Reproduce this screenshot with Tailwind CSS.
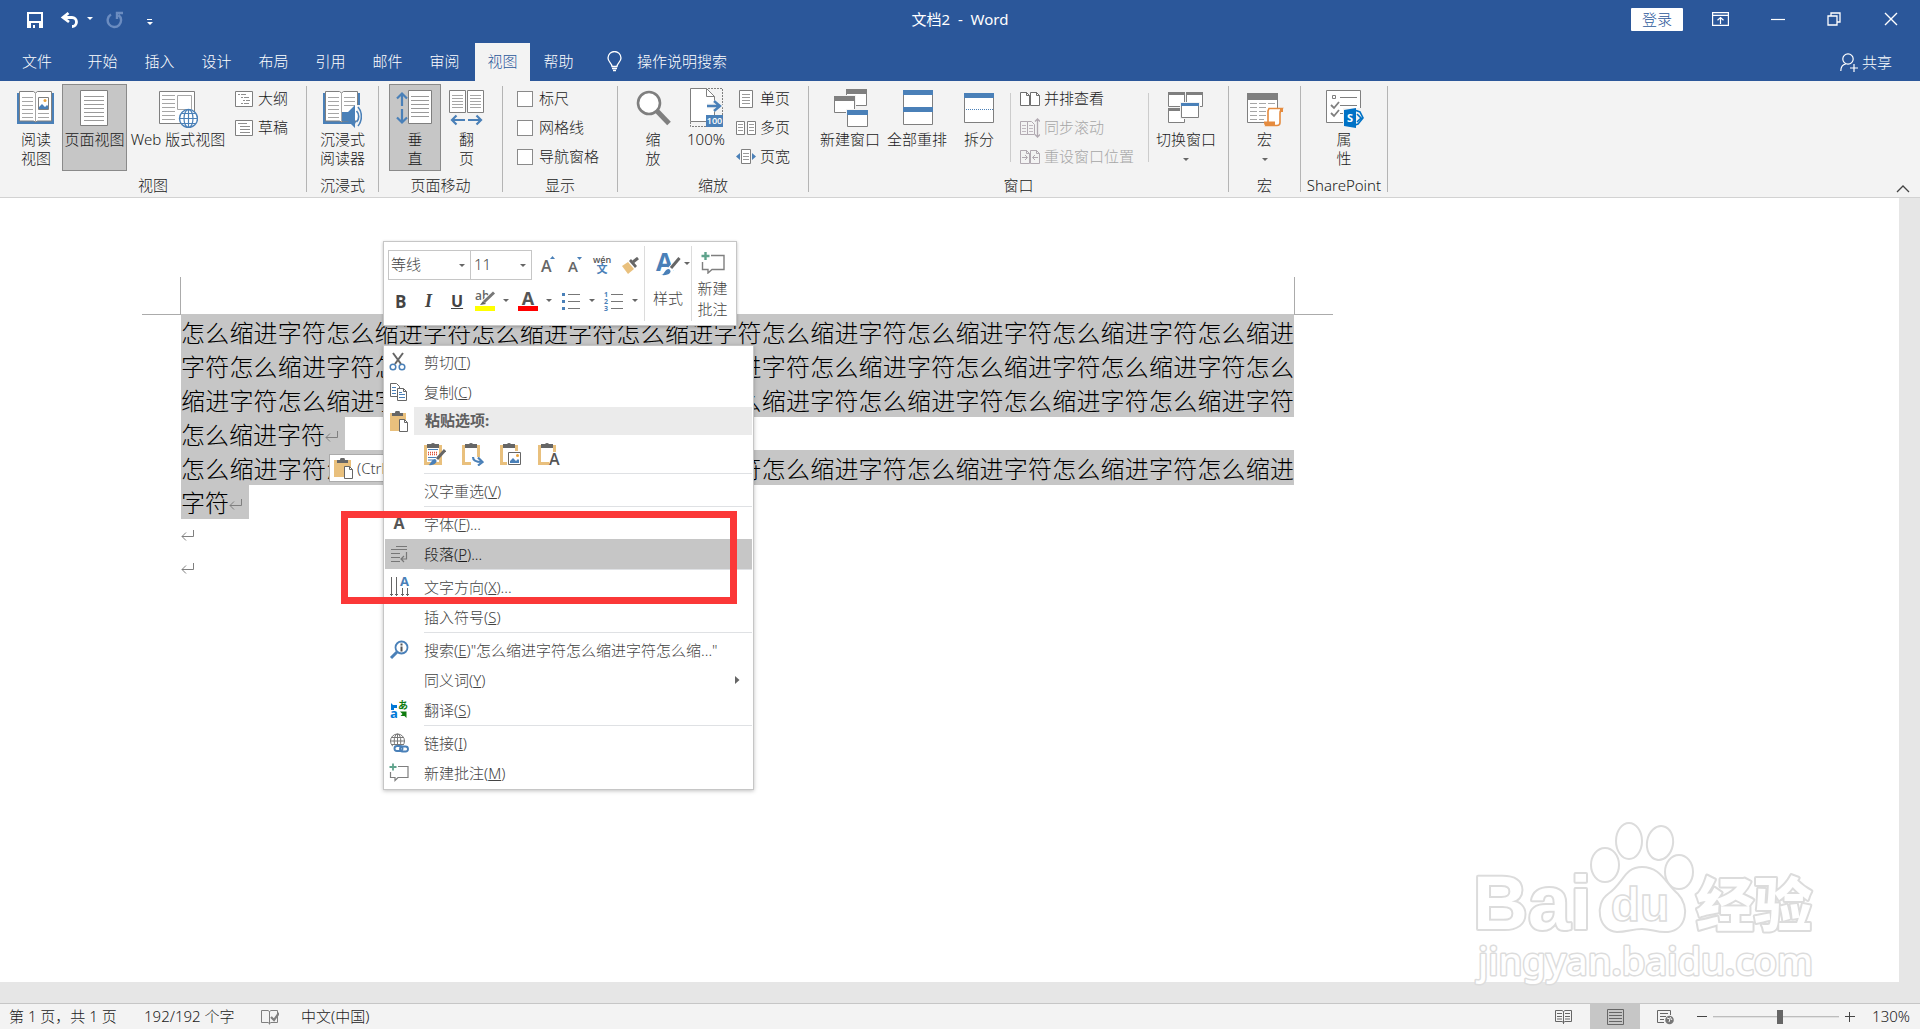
<!DOCTYPE html>
<html lang="zh-CN">
  <head>
    <meta charset="UTF-8" />
    <meta name="viewport" content="width=device-width, initial-scale=1.0" />
    <script src="https://cdn.jsdelivr.net/npm/@tailwindcss/browser@4"></script>
    <title>文档2 - Word</title>
  </head>
  <body class="flex h-screen flex-col overflow-hidden bg-[#e6e6e6] font-['Noto_Sans','Noto_Sans_CJK_SC',sans-serif] text-[15px] leading-[19px] font-light text-[#1a1a1a]">
    <header class="bg-[#2b579a] text-white">
      <!-- title bar -->
      <div class="grid h-[43px] grid-cols-[1fr_auto_1fr]">
        <div class="flex items-start pt-[11px] pl-[26px]">
          <button aria-label="保存">
            <svg width="18" height="18" viewBox="0 0 18 18"><path fill="#fff" fill-rule="evenodd" d="M1 1h16v16H1zM3 3v7h12V3zM5 12v5h2v-3h2v3h4v-5z" /></svg>
          </button>
          <button aria-label="撤消" class="ml-[16px]">
            <svg width="20" height="18" viewBox="0 0 20 18"><path d="M8.500 2L3 6.500L9 11M3.500 6.500H12a4.500 4.500 0 0 1 0 9" fill="none" stroke="#fff" stroke-width="2.800" /></svg>
          </button>
          <button aria-label="撤消列表" class="ml-[6px] pt-[5px]">
            <svg width="8" height="5" viewBox="0 0 8 5"><path d="M1 1h6L4 4z" fill="#fff" /></svg>
          </button>
          <button aria-label="重复" class="ml-[12px]">
            <svg width="18" height="18" viewBox="0 0 18 18"><path d="M12.500 4A6.700 6.700 0 1 1 5 3.500M11 8V2h6" fill="none" stroke="#6b8cc0" stroke-width="2.400" /></svg>
          </button>
          <button aria-label="自定义快速访问工具栏" class="ml-[22px] pt-[7px]">
            <svg width="8" height="8" viewBox="0 0 8 8"><path d="M1 1h5v1H1zM1 4h6L4 7z" fill="#fff" /></svg>
          </button>
        </div>
        <h1 class="self-start pt-[9px] text-[15px] leading-[20px] font-normal whitespace-pre">文档2  -  Word</h1>
        <div class="flex items-start justify-end pr-[22px]">
          <button class="mt-[8px] h-[23px] w-[52px] rounded-[1px] bg-white text-[#2b579a]">登录</button>
          <button aria-label="功能区显示选项" class="mt-[12px] ml-[29px]">
            <svg width="17" height="14" viewBox="0 0 17 14"><g fill="none" stroke="#fff" stroke-width="1.200"><path d="M.6.6h15.800v12.800H.6zM.6 3.300h15.800M8.500 12V5.500M5.500 8.300l3-2.800l3 2.800" /></g></svg>
          </button>
          <button aria-label="最小化" class="mt-[12px] ml-[42px]">
            <svg width="14" height="14" viewBox="0 0 14 14"><path d="M0 7.500h14" stroke="#fff" stroke-width="1.200" /></svg>
          </button>
          <button aria-label="还原" class="mt-[12px] ml-[42px]">
            <svg width="14" height="14" viewBox="0 0 14 14"><path d="M1 4h9v9H1zM4 4V1h9v9h-3" fill="none" stroke="#fff" stroke-width="1.300" /></svg>
          </button>
          <button aria-label="关闭" class="mt-[12px] ml-[43px]">
            <svg width="14" height="14" viewBox="0 0 14 14"><path d="M1 1l12 12M13 1L1 13" stroke="#fff" stroke-width="1.400" /></svg>
          </button>
        </div>
      </div>

      <!-- tabs -->
      <nav class="flex h-[38px] items-stretch">
        <button class="w-[74px] pb-[2px]">文件</button>
        <button class="w-[57px] pb-[2px]">开始</button>
        <button class="w-[57px] pb-[2px]">插入</button>
        <button class="w-[57px] pb-[2px]">设计</button>
        <button class="w-[57px] pb-[2px]">布局</button>
        <button class="w-[57px] pb-[2px]">引用</button>
        <button class="w-[57px] pb-[2px]">邮件</button>
        <button class="w-[57px] pb-[2px]">审阅</button>
        <button class="ml-[2px] w-[55px] bg-[#f3f3f3] pb-[2px] text-[#2b579a]">视图</button>
        <button class="w-[57px] pb-[2px]">帮助</button>
        <button class="ml-[20px] flex items-center gap-[15px] pb-[2px]">
          <svg width="15" height="21" viewBox="0 0 15 21"><path d="M5 15.500C5 12 1 11 1 7a6.500 6.500 0 0 1 13 0c0 4-4 5-4 8.500zM5 17.500h5M6 19.500h3" fill="none" stroke="#fff" stroke-width="1.300" /></svg>
          操作说明搜索
        </button>
        <button class="mr-[28px] ml-auto flex items-center gap-[4px]">
          <svg width="18" height="19" viewBox="0 0 18 19"><g fill="none" stroke="#fff" stroke-width="1.200"><circle cx="8" cy="6" r="5.200" /><path d="M.8 18c0-4 2-6.500 5-7M10 15h8M14 11v8" /></g></svg>
          共享
        </button>
      </nav>
    </header>

    <!-- ribbon -->
    <div class="flex h-[117px] shrink-0 border-b border-[#d2d2d2] bg-[#f3f3f3]">
      <section class="flex w-[306px] flex-col pt-[3px]">
        <div class="flex h-[87px] pl-[10px]">
          <button class="flex w-[52px] flex-col items-center gap-[2px] pt-[4px]">
            <svg width="40" height="40" viewBox="0 0 40 40">
              <path d="M1 5h37v31H1z" fill="#4a80b8" />
              <path d="M3.500 3.500h14l2 1.500l2-1.500h14v29.500h-14l-2 1l-2-1h-14z" fill="#fff" stroke="#7f7f7f" />
              <path d="M19.500 5v29M6 9.500h11M6 13.500h11M6 17.500h11M6 21.500h11M6 25.500h11M6 29.500h11M22 25.500h11M22 29.500h11" stroke="#a6a6a6" />
              <path d="M22.500 9.500h10v12h-10z" fill="#fff" stroke="#7f7f7f" />
              <path d="M23 21v-2l3-3l3 3l2-2l1 1v3z" fill="#4a80b8" /><circle cx="29" cy="12.500" r="1.500" fill="#e9a23b" />
            </svg>
            <span>阅读<br />视图</span>
          </button>
          <button class="flex w-[65px] flex-col items-center gap-[2px] border border-[#8a8a8a] bg-[#c6c6c6] pt-[3px]">
            <svg width="40" height="40" viewBox="0 0 40 40"><path d="M5.500 2.500h27v35h-27z" fill="#fff" stroke="#7f7f7f" /><path d="M9 8.500h20M9 12.500h20M9 16.500h20M9 20.500h20M9 24.500h20M9 28.500h20M9 32.500h20" stroke="#9a9a9a" /></svg>
            <span class="whitespace-nowrap">页面视图</span>
          </button>
          <button class="flex w-[102px] flex-col items-center gap-[2px] pt-[4px]">
            <svg width="40" height="40" viewBox="0 0 40 40">
              <path d="M1.500 3.500h35v32h-35z" fill="#fff" stroke="#7f7f7f" />
              <path d="M4 7.500h13M4 11.500h13M4 15.500h13M4 19.500h13M4 23.500h13M4 27.500h13M4 31.500h13" stroke="#a6a6a6" />
              <path d="M19.500 7.500h14v14h-14z" fill="#fff" stroke="#a6a6a6" />
              <circle cx="30.500" cy="30.500" r="9" fill="#fff" stroke="#4a80b8" stroke-width="1.400" />
              <path d="M21.500 30.500h18M30.500 21.500v18M23 25.500h15M23 35.500h15" stroke="#4a80b8" stroke-width="1.200" /><ellipse cx="30.500" cy="30.500" rx="4.500" ry="9" fill="none" stroke="#4a80b8" stroke-width="1.200" />
            </svg>
            <span class="whitespace-nowrap">Web 版式视图</span>
          </button>
          <div class="ml-[6px] flex flex-col">
            <button class="flex h-[29px] items-center gap-[5px]">
              <svg width="18" height="16" viewBox="0 0 18 16"><path d="M.5.5h17v15H.5z" fill="#fff" stroke="#7f7f7f" /><path d="M3 3.500h2M6 3.500h5M6 6.500h2M9 6.500h5M8 9.500h2M11 9.500h4M6 12.500h2M9 12.500h5" stroke="#8f8f8f" /></svg>
              大纲
            </button>
            <button class="flex h-[29px] items-center gap-[5px]">
              <svg width="18" height="16" viewBox="0 0 18 16"><path d="M.5.5h17v15H.5z" fill="#fff" stroke="#7f7f7f" /><path d="M3 3.500h9M5 6.500h10M5 9.500h10M5 12.500h10" stroke="#8f8f8f" /></svg>
              草稿
            </button>
          </div>
        </div>
        <p class="flex h-[26px] items-center justify-center pt-[2px]">视图</p>
      </section>
      <div class="my-[5px] w-px bg-[#b4b4b4]"></div>

      <section class="flex w-[71px] flex-col items-center pt-[3px]">
        <button class="flex h-[87px] flex-col items-center gap-[2px] pt-[4px]">
          <svg width="40" height="40" viewBox="0 0 40 40">
            <path d="M1 5h37v31H1z" fill="#4a80b8" />
            <path d="M3.500 3.500h14l2 1.500l2-1.500h14v29.500h-14l-2 1l-2-1h-14z" fill="#fff" stroke="#7f7f7f" />
            <path d="M19.500 5v29M6 9.500h11M6 13.500h11M6 17.500h11M6 21.500h11M6 25.500h11M6 29.500h11M22 9.500h11M22 13.500h11M22 17.500h11" stroke="#a6a6a6" />
            <path d="M35 17h5v23h-9l4-8z" fill="#f3f3f3" />
            <path d="M20 24h6l7-7v23l-7-7h-6z" fill="#4a80b8" /><path d="M34.500 23c3 3 3 8 0 11M36 19c4.500 5 4.500 14 0 19" fill="none" stroke="#4a80b8" stroke-width="1.600" />
          </svg>
          <span>沉浸式<br />阅读器</span>
        </button>
        <p class="flex h-[26px] items-center pt-[2px]">沉浸式</p>
      </section>
      <div class="my-[5px] w-px bg-[#b4b4b4]"></div>

      <section class="flex w-[123px] flex-col pt-[3px]">
        <div class="flex h-[87px] pl-[10px]">
          <button class="flex w-[52px] flex-col items-center gap-[2px] border border-[#8a8a8a] bg-[#c6c6c6] pt-[3px]">
            <svg width="40" height="40" viewBox="0 0 40 40">
              <path d="M13.500 2.500h23v33h-23z" fill="#fff" stroke="#7f7f7f" /><path d="M16 8.500h18M16 12.500h18M16 16.500h18M16 20.500h18M16 24.500h18M16 28.500h18" stroke="#9a9a9a" />
              <path d="M7 18V6M2 10.500L7 5.500l5 5M7 21v13M2 29.500l5 5l5-5" fill="none" stroke="#4a80b8" stroke-width="2.200" />
            </svg>
            <span>垂<br />直</span>
          </button>
          <button class="flex w-[51px] flex-col items-center gap-[2px] pt-[4px]">
            <svg width="40" height="40" viewBox="0 0 40 40">
              <path d="M2.500 2.500h16v22h-16zM20.500 2.500h16v22h-16z" fill="#fff" stroke="#7f7f7f" /><path d="M5 7.500h11M5 10.500h11M5 13.500h11M5 16.500h11M5 19.500h11M23 7.500h11M23 10.500h11M23 13.500h11M23 16.500h11M23 19.500h11" stroke="#a6a6a6" />
              <path d="M18 32H5M9.500 27.500L5 32l4.500 4.500M21 32h13M29.500 27.500L34 32l-4.500 4.500" fill="none" stroke="#4a80b8" stroke-width="2.200" />
            </svg>
            <span>翻<br />页</span>
          </button>
        </div>
        <p class="flex h-[26px] items-center justify-center pt-[2px]">页面移动</p>
      </section>
      <div class="my-[5px] w-px bg-[#b4b4b4]"></div>

      <section class="flex w-[114px] flex-col pt-[3px]">
        <div class="flex h-[87px] flex-col pl-[14px]">
          <label class="flex h-[29px] items-center gap-[6px]"><input type="checkbox" class="size-[16px] appearance-none border border-[#8a8a8a] bg-white" />标尺</label>
          <label class="flex h-[29px] items-center gap-[6px]"><input type="checkbox" class="size-[16px] appearance-none border border-[#8a8a8a] bg-white" />网格线</label>
          <label class="flex h-[29px] items-center gap-[6px]"><input type="checkbox" class="size-[16px] appearance-none border border-[#8a8a8a] bg-white" />导航窗格</label>
        </div>
        <p class="flex h-[26px] items-center justify-center pt-[2px]">显示</p>
      </section>
      <div class="my-[5px] w-px bg-[#b4b4b4]"></div>

      <section class="flex w-[190px] flex-col pt-[3px]">
        <div class="flex h-[87px] pl-[12px]">
          <button class="flex w-[46px] flex-col items-center gap-[2px] pt-[4px]">
            <svg width="40" height="40" viewBox="0 0 40 40"><circle cx="16" cy="15" r="11" fill="#fff" stroke="#7f7f7f" stroke-width="2.600" /><path d="M24 23l12 12.500" stroke="#7f7f7f" stroke-width="5" /></svg>
            <span>缩<br />放</span>
          </button>
          <button class="flex w-[60px] flex-col items-center gap-[2px] pt-[4px]">
            <svg width="40" height="40" viewBox="0 0 40 40">
              <path d="M22 .5h14.500V28M4.500 34v4.500H20" fill="none" stroke="#7f7f7f" stroke-dasharray="2 1" />
              <path d="M4.500.5h16l8 8v25h-24z" fill="#fff" stroke="#7f7f7f" /><path d="M20.500.5v8h8" fill="none" stroke="#7f7f7f" />
              <path d="M21 18h12M28 13l6 5l-6 5" fill="none" stroke="#f3f3f3" stroke-width="5" /><path d="M21 18h12M28 13l6 5l-6 5" fill="none" stroke="#4a80b8" stroke-width="2.400" />
              <path d="M20 27h17v12H20z" fill="#4a80b8" /><text x="28.500" y="36" text-anchor="middle" font-size="9" font-weight="600" fill="#fff" font-family="Open Sans">100</text>
            </svg>
            <span>100%</span>
          </button>
          <div class="flex flex-col">
            <button class="flex h-[29px] items-center gap-[4px]">
              <svg width="20" height="18" viewBox="0 0 20 18"><path d="M3.500.5h13v17h-13z" fill="#fff" stroke="#7f7f7f" /><path d="M6 4.500h8M6 7.500h8M6 10.500h8M6 13.500h8" stroke="#9a9a9a" /></svg>
              单页
            </button>
            <button class="flex h-[29px] items-center gap-[4px]">
              <svg width="20" height="16" viewBox="0 0 20 16"><path d="M.5 1.500h8v13h-8zM11.500 1.500h8v13h-8z" fill="#fff" stroke="#7f7f7f" /><path d="M2 4.500h5M2 7.500h5M2 10.500h5M13 4.500h5M13 7.500h5M13 10.500h5" stroke="#9a9a9a" /></svg>
              多页
            </button>
            <button class="flex h-[29px] items-center gap-[4px]">
              <svg width="20" height="16" viewBox="0 0 20 16"><path d="M5.500.5h9v14h-9z" fill="#fff" stroke="#7f7f7f" /><path d="M7 4.500h6M7 7.500h6M7 10.500h6" stroke="#9a9a9a" /><path d="M4 4v7L0 7.500zM16 4v7l4-3.500z" fill="#4a80b8" /></svg>
              页宽
            </button>
          </div>
        </div>
        <p class="flex h-[26px] items-center justify-center pt-[2px]">缩放</p>
      </section>
      <div class="my-[5px] w-px bg-[#b4b4b4]"></div>

      <section class="flex w-[419px] flex-col pt-[3px]">
        <div class="flex h-[87px] pl-[8px]">
          <button class="flex w-[66px] flex-col items-center gap-[2px] pt-[4px]">
            <svg width="40" height="40" viewBox="0 0 40 40">
              <path d="M16.500 1.500h20v16h-20z" fill="#fff" stroke="#7f7f7f" /><path d="M16 1h21v5H16z" fill="#7f7f7f" />
              <path d="M3 7h23v19H3z" fill="#f3f3f3" /><path d="M4.500 8.500h20v16h-20z" fill="#fff" stroke="#7f7f7f" /><path d="M4 8h21v5H4z" fill="#7f7f7f" />
              <path d="M16 21h23v19H16z" fill="#f3f3f3" /><path d="M17.500 22.500h20v16h-20z" fill="#fff" stroke="#7f7f7f" /><path d="M17 22h21v5H17z" fill="#4a80b8" />
            </svg>
            <span class="whitespace-nowrap">新建窗口</span>
          </button>
          <button class="flex w-[68px] flex-col items-center gap-[2px] pt-[4px]">
            <svg width="40" height="40" viewBox="0 0 40 40"><path d="M6.500 2.500h29v34h-29z" fill="#fff" stroke="#7f7f7f" /><path d="M6 2h30v5H6zM6 19h30v5H6z" fill="#4a80b8" /></svg>
            <span class="whitespace-nowrap">全部重排</span>
          </button>
          <button class="flex w-[56px] flex-col items-center gap-[2px] pt-[4px]">
            <svg width="40" height="40" viewBox="0 0 40 40"><path d="M5.500 5.500h29v29h-29z" fill="#fff" stroke="#7f7f7f" /><path d="M5 5h30v5H5z" fill="#4a80b8" /><path d="M7 21.500h27" stroke="#4a80b8" stroke-dasharray="1 1" /></svg>
            <span>拆分</span>
          </button>
          <div class="mt-[9px] ml-[3px] h-[69px] w-px bg-[#cccccc]"></div>
          <div class="ml-[9px] flex w-[128px] flex-col">
            <button class="flex h-[29px] items-center gap-[4px]">
              <svg width="20" height="16" viewBox="0 0 20 16"><path d="M.5 1.500h6l3 3v10h-9zM10.500 1.500h6l3 3v10h-9z" fill="#fff" stroke="#6f6f6f" /><path d="M6.500 1v3.500h3M16.500 1v3.500h3" fill="none" stroke="#6f6f6f" /></svg>
              并排查看
            </button>
            <button disabled class="flex h-[29px] items-center gap-[4px] text-[#a6a6a6]">
              <svg width="20" height="20" viewBox="0 0 20 20"><path d="M7.500 3.500H.5v13h7M7.500 3.500h4l3 3v10h-7z" fill="none" stroke="#b1a9b1" /><path d="M2 7.500h4M2 10.500h4M2 13.500h4M9 7.500h4M9 10.500h4M9 13.500h4" stroke="#c0b8c0" /><path d="M17.500 1v18M15 3.500L17.500 1L20 3.500M15 16.500l2.500 2.500l2.500-2.500" fill="none" stroke="#b1a9b1" stroke-width="1.300" /></svg>
              同步滚动
            </button>
            <button disabled class="flex h-[29px] items-center gap-[4px] text-[#a6a6a6]">
              <svg width="20" height="16" viewBox="0 0 20 16"><path d="M.5 1.500h6l3 3v10h-9zM10.500 1.500h6l3 3v10h-9z" fill="none" stroke="#b1a9b1" /><path d="M6.500 1v3.500h3M16.500 1v3.500h3M2 8.500h5M5 6l2.500 2.500L5 11M18 8.500h-5M15 6l-2.500 2.500L15 11" fill="none" stroke="#b1a9b1" /></svg>
              重设窗口位置
            </button>
          </div>
          <div class="mt-[9px] h-[69px] w-px bg-[#cccccc]"></div>
          <button class="flex w-[74px] flex-col items-center gap-[2px] pt-[4px]">
            <svg width="40" height="40" viewBox="0 0 40 40">
              <path d="M2.500 4.500h16v14h-16zM20.500 4.500h16v14h-16zM2.500 20.500h16v14h-16z" fill="#fff" stroke="#7f7f7f" /><path d="M2 4h17v3H2zM20 4h17v3H20zM2 20h17v3H2z" fill="#7f7f7f" />
              <path d="M14 14h20v17H14z" fill="#f3f3f3" /><path d="M15.500 15.500h17v14h-17z" fill="#fff" stroke="#7f7f7f" /><path d="M15 15h18v3H15z" fill="#4a80b8" />
            </svg>
            <span class="whitespace-nowrap">切换窗口</span>
            <svg class="mt-[7px]" width="6" height="4" viewBox="0 0 6 4"><path d="M0 0h6L3 3z" fill="#666" /></svg>
          </button>
        </div>
        <p class="flex h-[26px] items-center justify-center pt-[2px]">窗口</p>
      </section>
      <div class="my-[5px] w-px bg-[#b4b4b4]"></div>

      <section class="flex w-[71px] flex-col items-center pt-[3px]">
        <button class="flex h-[87px] flex-col items-center gap-[2px] pt-[4px]">
          <svg width="40" height="40" viewBox="0 0 40 40">
            <path d="M2.500 5.500h30v29h-30z" fill="#fff" stroke="#7f7f7f" /><path d="M2 5h31v7H2z" fill="#7f7f7f" />
            <path d="M5 15.500h7M14 15.500h7M23 15.500h7M5 19.500h7M14 19.500h7M5 23.500h7M14 23.500h7M5 27.500h7M14 27.500h7M5 31.500h7M14 31.500h5" stroke="#a6a6a6" />
            <path d="M24 20.500h13c-2 2-2 3-2 5v9c0 2-1 3-3 3H21l2-3V23z" fill="#fff" stroke="#e58b3e" stroke-width="1.600" /><path d="M19 33.500h11v4H21c-2 0-2-2-2-4zM35 20h3v4h-3z" fill="#e58b3e" />
          </svg>
          <span>宏</span>
          <svg class="mt-[7px]" width="6" height="4" viewBox="0 0 6 4"><path d="M0 0h6L3 3z" fill="#666" /></svg>
        </button>
        <p class="flex h-[26px] items-center pt-[2px]">宏</p>
      </section>
      <div class="my-[5px] w-px bg-[#b4b4b4]"></div>

      <section class="flex w-[86px] flex-col items-center pt-[3px]">
        <button class="flex h-[87px] flex-col items-center gap-[2px] pt-[4px]">
          <svg width="40" height="40" viewBox="0 0 40 40">
            <path d="M2.500 2.500h34v32h-34z" fill="#fff" stroke="#7f7f7f" /><path d="M8.500 7.500h3v3h-3zM16 9.500h17M16 17.500h17M16 25.500h5" fill="none" stroke="#7f7f7f" /><path d="M7 17l3 3l5-6M7 25l3 3l5-6" fill="none" stroke="#7f7f7f" stroke-width="1.800" />
            <path d="M19 20h21v20H19z" fill="#f3f3f3" /><path d="M32 22.500l4 1.500l3 6l-5 6l-3 1M33 26l4 4l-4 4" fill="none" stroke="#0072c6" stroke-width="1.600" />
            <path d="M20 22l12-2v20l-12-2z" fill="#0072c6" /><text x="26" y="34" text-anchor="middle" font-size="11" font-weight="700" fill="#fff" font-family="Open Sans">S</text>
          </svg>
          <span>属<br />性</span>
        </button>
        <p class="flex h-[26px] items-center pt-[2px]">SharePoint</p>
      </section>
      <div class="my-[5px] w-px bg-[#b4b4b4]"></div>
      <button aria-label="折叠功能区" class="mr-[10px] mb-[4px] ml-auto self-end">
        <svg width="14" height="8" viewBox="0 0 14 8"><path d="M1 7l6-6l6 6" fill="none" stroke="#444" stroke-width="1.300" /></svg>
      </button>
    </div>

    <!-- document -->
    <main class="relative mr-[21px] min-h-0 flex-1 bg-white pt-[79px] pl-[142px]">
      <div class="flex h-[38px]">
        <div class="w-[39px] border-r border-b border-[#ababab]"></div>
        <div class="w-[1113px]"></div>
        <div class="w-[39px] border-b border-l border-[#ababab]"></div>
      </div>
      <article class="ml-[39px] w-[1113px] text-justify font-['Noto_Sans_CJK_SC',sans-serif] text-[24px] leading-[34px] text-black">
        <p><span class="bg-[#c6c6c6] pr-[7px]">怎么缩进字符怎么缩进字符怎么缩进字符怎么缩进字符怎么缩进字符怎么缩进字符怎么缩进字符怎么缩进字符怎么缩进字符怎么缩进字符怎么缩进字符怎么缩进字符怎么缩进字符怎么缩进字符怎么缩进字符怎么缩进字符怎么缩进字符怎么缩进字符怎么缩进字符怎么缩进字符怎么缩进字符怎么缩进字符怎么缩进字符怎么缩进字符<svg class="inline" width="13" height="12" viewBox="0 0 13 12"><path d="M12.500 0v6.500H1M5 2.500l-4 4l4 4" fill="none" stroke="#7f7f7f" /></svg></span></p>
        <p><span class="bg-[#c6c6c6] pr-[7px]">怎么缩进字符怎么缩进字符怎么缩进字符怎么缩进字符怎么缩进字符怎么缩进字符怎么缩进字符怎么缩进字符<svg class="inline" width="13" height="12" viewBox="0 0 13 12"><path d="M12.500 0v6.500H1M5 2.500l-4 4l4 4" fill="none" stroke="#7f7f7f" /></svg></span></p>
        <p class="flex h-[33px] items-center"><svg width="13" height="12" viewBox="0 0 13 12"><path d="M12.500 0v6.500H1M5 2.500l-4 4l4 4" fill="none" stroke="#7f7f7f" /></svg></p>
        <p class="flex h-[33px] items-center"><svg width="13" height="12" viewBox="0 0 13 12"><path d="M12.500 0v6.500H1M5 2.500l-4 4l4 4" fill="none" stroke="#7f7f7f" /></svg></p>
      </article>

      <!-- paste options tag -->
      <button class="absolute top-[256px] left-[329px] flex h-[28px] items-center gap-[3px] border border-[#ababab] bg-white px-[4px] text-[#444]">
        <svg width="20" height="21" viewBox="0 0 20 21"><path d="M0 2h17v17H0z" fill="#e9c07d" /><path d="M3 2h3a2.500 2.500 0 0 1 5 0h3v3H3z" fill="#666" /><path d="M10.500 8.500h5l3 3v9h-8z" fill="#fff" stroke="#666" /><path d="M15.500 8.500v3h3" fill="none" stroke="#666" /></svg>
        (Ctrl)
      </button>

      <!-- mini toolbar -->
      <div class="absolute top-[43px] left-[383px] flex h-[85px] w-[354px] border border-[#c6c6c6] bg-white text-[#444] shadow-[0_1px_3px_rgba(0,0,0,0.25)]">
        <div class="flex w-[260px] flex-col pt-[8px] pl-[4px]">
          <div class="flex h-[30px] items-center">
            <div class="relative h-[30px] w-[83px]">
              <select aria-label="字体" class="h-full w-full appearance-none border border-[#c6c6c6] bg-white px-[2px] pb-[2px]"><option>等线</option></select>
              <svg class="pointer-events-none absolute top-[14px] right-[6px]" width="6" height="4" viewBox="0 0 6 4"><path d="M0 0h6L3 3z" fill="#666" /></svg>
            </div>
            <div class="relative -ml-px h-[30px] w-[62px]">
              <select aria-label="字号" class="h-full w-full appearance-none border border-[#c6c6c6] bg-white px-[3px] pb-[2px]"><option>11</option></select>
              <svg class="pointer-events-none absolute top-[14px] right-[6px]" width="6" height="4" viewBox="0 0 6 4"><path d="M0 0h6L3 3z" fill="#666" /></svg>
            </div>
            <button aria-label="增大字号" class="ml-[9px]"><svg class="overflow-visible" width="15" height="18" viewBox="0 0 15 18"><text x="0" y="16" font-size="16" font-weight="600" fill="#666" font-family="Open Sans">A</text><path d="M9 3h5l-2.500-3z" fill="#4a80b8" /></svg></button>
            <button aria-label="减小字号" class="ml-[12px]"><svg class="overflow-visible" width="15" height="18" viewBox="0 0 15 18"><text x="0" y="16" font-size="15" font-weight="600" fill="#666" font-family="Open Sans">A</text><path d="M9 1h5l-2.500 3z" fill="#4a80b8" /></svg></button>
            <button aria-label="拼音指南" class="ml-[10px]"><svg class="overflow-visible" width="18" height="20" viewBox="0 0 18 20"><text x="9" y="8" text-anchor="middle" font-size="9" font-weight="600" fill="#555" font-family="Open Sans">wén</text><text x="9" y="18" text-anchor="middle" font-size="11" font-weight="700" fill="#4a80b8" font-family="Noto Sans CJK SC">文</text></svg></button>
            <button aria-label="格式刷" class="ml-[10px]"><svg width="18" height="17" viewBox="0 0 18 17"><path d="M1 9l6-4l6 7l-6 5z" fill="#e9c07d" /><path d="M8 4l2-2l6 7l-2 2z" fill="#666" /><path d="M12 5l5-4" stroke="#666" stroke-width="3" /></svg></button>
          </div>
          <div class="mt-[9px] flex h-[24px] items-center pl-[7px]">
            <button aria-label="加粗" class="w-[15px] text-left font-['Open_Sans'] text-[17px] font-bold">B</button>
            <button aria-label="倾斜" class="ml-[15px] w-[12px] text-left font-['Liberation_Serif'] text-[18px] font-bold italic">I</button>
            <button aria-label="下划线" class="ml-[14px] w-[12px] text-left font-['Open_Sans'] text-[16px] font-bold underline">U</button>
            <button aria-label="突出显示" class="ml-[12px]"><svg class="overflow-visible" width="20" height="20" viewBox="0 0 20 20"><text x="0" y="9" font-size="12" font-weight="600" fill="#666" font-family="Open Sans">ab</text><path d="M19 1.500L9 11" stroke="#fff" stroke-width="5" /><path d="M19 1.500L9 11" stroke="#777" stroke-width="3" /><path d="M5 14l3-4l3 3z" fill="#666" /><path d="M0 15h20v5H0z" fill="#ff0" /></svg></button>
            <svg class="ml-[8px]" width="6" height="4" viewBox="0 0 6 4"><path d="M0 0h6L3 3z" fill="#666" /></svg>
            <button aria-label="字体颜色" class="ml-[9px]"><svg class="overflow-visible" width="20" height="20" viewBox="0 0 20 20"><text x="10" y="14" text-anchor="middle" font-size="18" font-weight="700" fill="#555" font-family="Open Sans">A</text><path d="M0 15h20v5H0z" fill="red" /></svg></button>
            <svg class="ml-[8px]" width="6" height="4" viewBox="0 0 6 4"><path d="M0 0h6L3 3z" fill="#666" /></svg>
            <button aria-label="项目符号" class="ml-[9px]"><svg width="20" height="18" viewBox="0 0 20 18"><path d="M1 1h3v3H1zM1 8h3v3H1zM1 15h3v3H1z" fill="#4a80b8" /><path d="M7 2.500h12M7 9.500h12M7 16.500h12" stroke="#777" /></svg></button>
            <svg class="ml-[8px]" width="6" height="4" viewBox="0 0 6 4"><path d="M0 0h6L3 3z" fill="#666" /></svg>
            <button aria-label="编号" class="ml-[9px]"><svg class="overflow-visible" width="20" height="19" viewBox="0 0 20 19"><g font-size="7" font-weight="700" fill="#4a80b8" font-family="Open Sans"><text x="0" y="5">1</text><text x="0" y="12">2</text><text x="0" y="19">3</text></g><path d="M7 2.500h12M7 9.500h12M7 16.500h12" stroke="#777" /></svg></button>
            <svg class="ml-[8px]" width="6" height="4" viewBox="0 0 6 4"><path d="M0 0h6L3 3z" fill="#666" /></svg>
          </div>
        </div>
        <div class="my-[4px] w-px bg-[#dcdcdc]"></div>
        <button class="flex w-[46px] flex-col items-center gap-[12px] pt-[10px]">
          <svg class="overflow-visible" width="46" height="25" viewBox="0 0 46 25"><text x="11" y="19" font-size="25" font-weight="700" fill="#4a80b8" font-family="Open Sans">A</text><path d="M35 7L24 19" stroke="#fff" stroke-width="6" /><path d="M34.500 6L26 16" stroke="#666" stroke-width="3" /><path d="M16 23c4 0 3-6 8-6c4 3 0 7-8 6z" fill="#4a80b8" /><path d="M39 10h6l-3 3z" fill="#666" /></svg>
          <span>样式</span>
        </button>
        <div class="my-[4px] w-px bg-[#dcdcdc]"></div>
        <button class="flex flex-1 flex-col items-center gap-[4px] pt-[9px] pr-[3px]">
          <svg width="24" height="23" viewBox="0 0 24 23"><path d="M10 4.500h13v14H11l-4 3.500v-3.500H1.500V11" fill="none" stroke="#7f7f7f" stroke-width="1.400" /><path d="M4.500 1v8M.5 5h8" stroke="#5fa38c" stroke-width="2.400" /></svg>
          <span class="leading-[21px]">新建<br />批注</span>
        </button>
      </div>

      <!-- context menu -->
      <ul class="absolute top-[147px] left-[383px] w-[371px] border border-[#c6c6c6] bg-white p-px text-[#444] shadow-[0_1px_4px_rgba(0,0,0,0.25)]">
        <li><button class="flex h-[30px] w-full items-center gap-[15px] pl-[4px] text-left">
          <svg width="20" height="20" viewBox="0 0 20 20"><path d="M4 1l8 11M14 1L6 12" stroke="#666" stroke-width="2" /><circle cx="4" cy="15" r="2.800" fill="none" stroke="#4a80b8" stroke-width="1.500" /><circle cx="13" cy="15" r="2.800" fill="none" stroke="#4a80b8" stroke-width="1.500" /></svg>
          <span>剪切(<u>T</u>)</span></button></li>
        <li><button class="flex h-[30px] w-full items-center gap-[15px] pl-[4px] text-left">
          <svg width="20" height="20" viewBox="0 0 20 20"><path d="M1.500 1.500h6l3 3v10h-9z" fill="#fff" stroke="#666" /><path d="M3 5.500h4M3 8.500h4M3 11.500h4" stroke="#4a80b8" /><path d="M8.500 6.500h6l3 3v9h-9z" fill="#fff" stroke="#666" /><path d="M14.500 6.500v3h3" fill="none" stroke="#666" /><path d="M10 10.500h3M10 12.500h6M10 15.500h6" stroke="#4a80b8" /></svg>
          <span>复制(<u>C</u>)</span></button></li>
        <li class="flex h-[28px] items-center pl-[4px]">
          <svg width="20" height="21" viewBox="0 0 20 21"><path d="M1 2h16v18H1z" fill="#e9c07d" /><path d="M3 2h3a2.500 2.500 0 0 1 5 0h3v3H3z" fill="#666" /><path d="M10.500 8.500h5l3 3v9h-8z" fill="#fff" stroke="#666" /><path d="M15.500 8.500v3h3" fill="none" stroke="#666" /></svg>
          <span class="ml-[5px] flex h-full flex-1 items-center bg-[#ebebeb] pb-[2px] pl-[11px] font-bold text-[#5f5f5f]">粘贴选项:</span>
        </li>
        <li class="flex h-[38px] items-center gap-[16px] pl-[39px]">
          <button aria-label="保留源格式"><svg width="22" height="24" viewBox="0 0 22 24"><path d="M0 3h18v20H0z" fill="#e9c07d" /><path d="M3 6h12v14H3z" fill="#fff" /><path d="M3 2h4a2.500 2.500 0 0 1 4 0h4v4H3z" fill="#666" /><path d="M4 7.500h10M4 15.500h8M4 18h5" stroke="#4a80b8" /><path d="M4 10.500h10M4 12.500h10" stroke="#e0533a" stroke-width="1.500" stroke-dasharray="1 1" /><path d="M21 8l-8 9" stroke="#666" stroke-width="3" /><path d="M4 23c3 0 3-6 7-6c4 2 0 7-7 6z" fill="#4a80b8" /></svg></button>
          <button aria-label="合并格式"><svg width="22" height="24" viewBox="0 0 22 24"><path d="M0 3h18v20H0z" fill="#e9c07d" /><path d="M3 6h12v14H3z" fill="#fff" /><path d="M3 2h4a2.500 2.500 0 0 1 4 0h4v4H3z" fill="#666" /><path d="M9 15h13v9H9z" fill="#fff" /><path d="M11 15c0 4 3 5 9 5M16 15.500l4.500 4.500l-4.500 3.500" fill="none" stroke="#4a80b8" stroke-width="2.200" /></svg></button>
          <button aria-label="图片"><svg width="22" height="24" viewBox="0 0 22 24"><path d="M0 3h18v20H0z" fill="#e9c07d" /><path d="M3 6h12v14H3z" fill="#fff" /><path d="M3 2h4a2.500 2.500 0 0 1 4 0h4v4H3z" fill="#666" /><path d="M7 9h15v15H7z" fill="#fff" /><path d="M8.500 10.500h12v12h-12z" fill="#fff" stroke="#666" /><path d="M10 21v-2l3-3l3 3l2-2l1 1v3z" fill="#4a80b8" /><circle cx="17.500" cy="13.500" r="1.500" fill="#e9a23b" /></svg></button>
          <button aria-label="只保留文本"><svg class="overflow-visible" width="22" height="24" viewBox="0 0 22 24"><path d="M0 3h18v20H0z" fill="#e9c07d" /><path d="M3 6h12v14H3z" fill="#fff" /><path d="M3 2h4a2.500 2.500 0 0 1 4 0h4v4H3z" fill="#666" /><path d="M11 10h11v14H11z" fill="#fff" /><text x="11" y="23" font-size="16" font-weight="600" fill="#555" font-family="Open Sans">A</text></svg></button>
        </li>
        <li class="mb-[2px] ml-[39px] h-px bg-[#dfe1e4]"></li>
        <li><button class="flex h-[30px] w-full items-center pl-[39px]">汉字重选(<u>V</u>)</button></li>
        <li class="mb-[2px] ml-[39px] h-px bg-[#dfe1e4]"></li>
        <li><button class="flex h-[30px] w-full items-center gap-[15px] pl-[4px] text-left">
          <svg class="overflow-visible" width="20" height="20" viewBox="0 0 20 20"><text x="10" y="15" text-anchor="middle" font-size="16" font-weight="700" fill="#555" font-family="Open Sans">A</text></svg>
          <span>字体(<u>F</u>)...</span></button></li>
        <li><button class="flex h-[30px] w-full items-center gap-[15px] bg-[#c6c6c6] pl-[4px] text-left text-[#1a1a1a]">
          <svg width="20" height="20" viewBox="0 0 20 20"><path d="M7 2.500h11M2 5.500h16M2 9.500h9M2 13.500h9M2 17.500h9M17.500 8v7h-5M15 12l-3 3l3 3" fill="none" stroke="#777" stroke-width="1.200" /></svg>
          <span>段落(<u>P</u>)...</span></button></li>
        <li class="mb-[2px] ml-[39px] h-px bg-[#dfe1e4]"></li>
        <li><button class="flex h-[30px] w-full items-center gap-[15px] pl-[4px] text-left">
          <svg class="overflow-visible" width="20" height="20" viewBox="0 0 20 20"><path d="M2.500 0v19M7.500 0v19M13.500 11v8M18.500 11v8M1 17.500h3M6 17.500h3M12 17.500h3M17 17.500h3" stroke="#666" /><text x="11" y="9" font-size="13" font-weight="700" fill="#4a80b8" font-family="Open Sans">A</text></svg>
          <span>文字方向(<u>X</u>)...</span></button></li>
        <li><button class="flex h-[30px] w-full items-center pl-[39px]">插入符号(<u>S</u>)</button></li>
        <li class="mb-[2px] ml-[39px] h-px bg-[#dfe1e4]"></li>
        <li><button class="flex h-[30px] w-full items-center gap-[15px] pl-[4px] text-left">
          <svg width="20" height="20" viewBox="0 0 20 20"><circle cx="12.500" cy="7.500" r="6" fill="none" stroke="#4a80b8" stroke-width="1.800" /><path d="M8 12l-6 6" stroke="#4a80b8" stroke-width="3" /><path d="M11.500 3.500h2v2h-2zM11.500 6.500h2v5h-2z" fill="#555" /></svg>
          <span>搜索(<u>E</u>)"怎么缩进字符怎么缩进字符怎么缩..."</span></button></li>
        <li><button class="flex h-[30px] w-full items-center pr-[12px] pl-[39px]">同义词(<u>Y</u>)
          <svg class="ml-auto" width="5" height="8" viewBox="0 0 5 8"><path d="M0 0v8l4.500-4z" fill="#666" /></svg></button></li>
        <li><button class="flex h-[30px] w-full items-center gap-[15px] pl-[4px] text-left">
          <svg class="overflow-visible" width="20" height="20" viewBox="0 0 20 20"><text x="1" y="18" font-size="13" font-weight="700" fill="#0078d7" font-family="Open Sans">a</text><text x="9" y="9" font-size="10" font-weight="700" fill="#107c10" font-family="Noto Sans CJK JP">あ</text><path d="M2 3l2 2h4v3H5v2H2z" fill="#0078d7" /><path d="M11 11.500h6.500V18l-2-2h-4l2-2z" fill="#107c10" /></svg>
          <span>翻译(<u>S</u>)</span></button></li>
        <li class="mb-[2px] ml-[39px] h-px bg-[#dfe1e4]"></li>
        <li><button class="flex h-[30px] w-full items-center gap-[15px] pl-[4px] text-left">
          <svg width="20" height="20" viewBox="0 0 20 20"><g fill="none" stroke="#777"><circle cx="8.500" cy="8" r="7" /><ellipse cx="8.500" cy="8" rx="3.300" ry="7" /><path d="M1.500 8h14M2.500 4.500h12M2.500 11.500h12M8.500 1v14" /></g><path d="M4 12h16v8H4z" fill="#fff" /><g fill="none" stroke="#4a80b8" stroke-width="1.900"><rect x="5.500" y="13" width="8" height="5" rx="2.500" /><rect x="11" y="13.500" width="8" height="5" rx="2.500" /></g></svg>
          <span>链接(<u>I</u>)</span></button></li>
        <li><button class="flex h-[30px] w-full items-center gap-[15px] pl-[4px] text-left">
          <svg width="20" height="20" viewBox="0 0 20 20"><path d="M9 3.500h10v11H9l-3 3v-3H1.500V9" fill="none" stroke="#7f7f7f" stroke-width="1.200" /><path d="M4 .5v7M.5 4h7" stroke="#5fa38c" stroke-width="1.800" /></svg>
          <span>新建批注(<u>M</u>)</span></button></li>
      </ul>

      <!-- highlight frame -->
      <div class="pointer-events-none absolute top-[313px] left-[341px] h-[93px] w-[396px] border-[7px] border-[#fb3838]"></div>

      <!-- watermark -->
      <svg class="pointer-events-none absolute right-[79px] -bottom-[14px] overflow-visible" width="350" height="180" viewBox="0 0 350 180" aria-hidden="true">
        <g fill="#fff" stroke="#dcdcdc" stroke-width="2">
          <g style="paint-order: stroke" stroke-width="4" stroke-linejoin="round">
            <text x="3" y="113" font-family="Liberation Sans" font-weight="700" font-size="76">Bai</text>
            <text x="226" y="110" font-family="Noto Sans CJK SC" font-weight="900" font-size="58">经验</text>
            <text x="8" y="159" font-family="Noto Sans" font-weight="500" font-size="38" stroke-width="3">jingyan.baidu.com</text>
          </g>
          <ellipse cx="135" cy="49" rx="14" ry="17" /><ellipse cx="159" cy="25" rx="13" ry="18" />
          <ellipse cx="190" cy="27" rx="13" ry="17" transform="rotate(10 190 27)" /><ellipse cx="209" cy="56" rx="14" ry="17" />
          <path d="M172 51c-18 0-18 16-34 27c-14 10-10 37 9 38c10 0 15-3 25-3s15 4 26 3c19-2 22-26 10-38c-13-11-17-27-36-27z" />
          <text x="170" y="105" text-anchor="middle" font-family="Liberation Sans" font-weight="700" font-size="48" stroke-width="1.500">du</text>
        </g>
      </svg>
    </main>

    <!-- status bar -->
    <footer class="mt-[21px] flex h-[26px] shrink-0 items-center border-t border-[#c6c6c6] bg-[#f3f3f3] pl-[9px]">
      <span class="w-[135px]">第 1 页，共 1 页</span>
      <span class="w-[117px]">192/192 个字</span>
      <svg width="18" height="16" viewBox="0 0 18 16"><path d="M8.500 2.500L7 1.500H.5v12H7l1.500 1M8.500 2.500L10 1.500h6.500v12H10l-1.500 1M8.500 2.500v13" fill="none" stroke="#7f7f7f" /><path d="M10 8l3 3l5-7" fill="none" stroke="#7f7f7f" stroke-width="2.200" /></svg>
      <span class="ml-[22px]">中文(中国)</span>
      <div class="ml-auto flex h-full items-center pr-[10px]">
        <button aria-label="阅读视图" class="mr-[17px]"><svg width="18" height="16" viewBox="0 0 18 16"><path d="M.5 1.500H7l1.500 1l1.500-1h6.500v11H10l-1.500 1l-1.500-1H.5zM8.500 2.500V15" fill="none" stroke="#666" /><path d="M2 4.500h5M2 7.500h5M2 10h5M10 4.500h5M10 7.500h5M10 10h5" stroke="#666" /></svg></button>
        <button aria-label="页面视图" class="flex h-full w-[50px] items-center justify-center bg-[#c6c6c6]"><svg width="17" height="16" viewBox="0 0 17 16"><path d="M.5.5h16v15H.5zM2 3.500h13M2 6.500h13M2 9.500h13M2 12.500h13" fill="none" stroke="#666" /></svg></button>
        <button aria-label="Web 版式视图" class="ml-[17px]"><svg width="18" height="16" viewBox="0 0 18 16"><path d="M7 13.500H.5V1.500h13V6M3 4.500h8M3 7.500h6M3 10.500h4" fill="none" stroke="#666" /><circle cx="12.500" cy="11" r="4.300" fill="#777" /><path d="M10 9l3 1l-1 3M13 8l2 3" stroke="#f3f3f3" fill="none" /></svg></button>
        <button aria-label="缩小" class="ml-[22px]"><svg width="10" height="10" viewBox="0 0 10 10"><path d="M0 4.500h10" stroke="#444" /></svg></button>
        <input type="range" aria-label="显示比例" min="10" max="234" value="130" class="mx-[6px] h-[14px] w-[126px] appearance-none bg-linear-to-b from-transparent from-[6px] via-[#ababab] via-[6px] to-transparent to-[8px] [&::-webkit-slider-thumb]:h-[14px] [&::-webkit-slider-thumb]:w-[6px] [&::-webkit-slider-thumb]:appearance-none [&::-webkit-slider-thumb]:bg-[#666666]" />
        <button aria-label="放大"><svg width="10" height="10" viewBox="0 0 10 10"><path d="M0 4.500h10M4.500 0v10" stroke="#444" /></svg></button>
        <span class="ml-[15px] w-[40px] text-right">130%</span>
      </div>
    </footer>
  </body>
</html>
